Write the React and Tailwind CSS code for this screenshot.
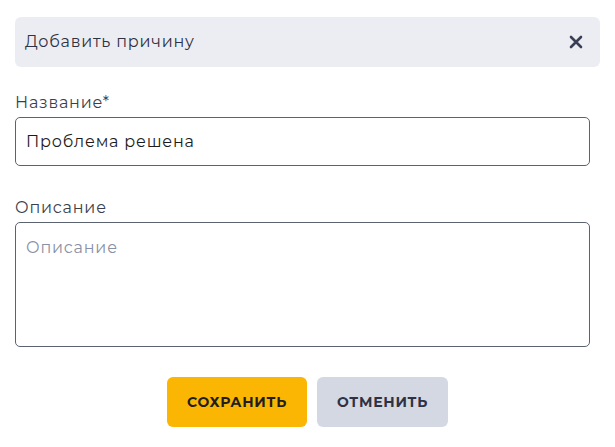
import React, { useState } from 'react'

const App = () => {
    const [state, setState] = useState({
        name: 'Проблема решена',
        description: '',
    })

    const handleChange = (key) => (e) => {
        const value = e.target.value
        setState((prev) => ({ ...prev, [key]: value }))
    }

    return (
        <div className="bg-white min-h-screen px-[15px] pt-[17px] tracking-[0.05em] font-['Montserrat','Inter',sans-serif]">
            {/* header */}
            <div className="h-[50px] rounded-md bg-[#ECEDF3] flex items-center justify-between pl-[10px] pr-[17px]">
                <p className="text-[16px] text-[#2F3243]">Добавить причину</p>
                <svg width="14" height="14" viewBox="0 0 14 14" className="text-[#3A3F55] cursor-pointer">
                    <path d="M2 2L12 12M12 2L2 12" stroke="currentColor" strokeWidth="2.6" strokeLinecap="round" />
                </svg>
            </div>

            <div className="pr-[10px]">
                {/* name */}
                <label className="block mt-[24px] mb-[2px] text-[16px] leading-[24px] text-[#3A3F4E]">Название*</label>
                <input
                    value={state.name}
                    onChange={handleChange('name')}
                    className="w-full h-[49px] rounded-[5px] border border-[#5C6370] px-[10px] text-[16px] text-[#1C1C1C] tracking-[0.05em] outline-none"
                />

                {/* description */}
                <label className="block mt-[30px] mb-[2px] text-[16px] leading-[24px] text-[#3A3F4E]">Описание</label>
                <textarea
                    value={state.description}
                    onChange={handleChange('description')}
                    placeholder="Описание"
                    className="block w-full h-[125px] rounded-[5px] border border-[#5C6370] px-[10px] pt-[13px] text-[16px] leading-[24px] text-[#1C1C1C] tracking-[0.05em] placeholder:text-[#8A91A5] outline-none resize-none"
                />
            </div>

            {/* actions */}
            <div className="flex justify-center gap-[10px] mt-[30px]">
                <button className="h-[50px] w-[140px] rounded-md bg-[#FBB604] text-[14px] font-bold uppercase tracking-[0.05em] text-[#1F1F1F]">
                    Сохранить
                </button>
                <button className="h-[50px] w-[131px] rounded-md bg-[#D4D8E2] text-[14px] font-bold uppercase tracking-[0.05em] text-[#2F3243]">
                    Отменить
                </button>
            </div>
        </div>
    )
}

export default App
